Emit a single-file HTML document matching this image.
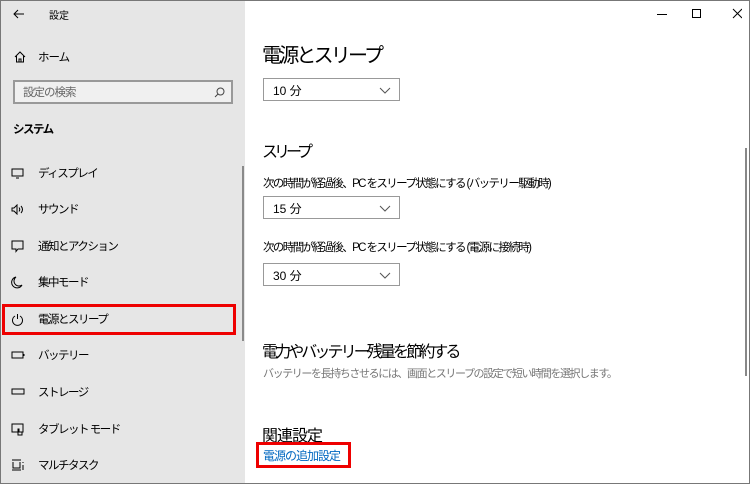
<!DOCTYPE html>
<html><head><meta charset="utf-8"><style>
*{margin:0;padding:0;box-sizing:border-box}
body{width:750px;height:484px;overflow:hidden;font-family:"Liberation Sans","Noto Sans CJK JP",sans-serif;background:#fff;position:relative;color:#000}
.win{position:absolute;left:0;top:0;width:750px;height:484px;border:1px solid #777;}
.side{position:absolute;left:1px;top:1px;width:244px;height:482px;background:#e6e6e6}
.abs{position:absolute;white-space:nowrap}
.item{position:absolute;left:37px;font-size:11.5px;letter-spacing:-1.5px}
.ic{position:absolute;left:10px}
.dd{position:absolute;left:263px;width:137px;height:23px;border:1px solid #999;font-size:12px;padding:3px 0 0 9px}
.dd svg{position:absolute;right:8px;top:8px}
</style></head><body>
<div class="win"></div>
<div class="side">
<svg class="abs" style="left:12px;top:8px" width="12" height="10" viewBox="0 0 12 10"><path d="M11 5H1M5 1L1 5l4 4" stroke="#000" fill="none" stroke-width="1"/></svg>
<div class="abs" style="left:48px;top:6px;font-size:10px">設定</div>
<svg class="abs" style="left:13px;top:50px" width="12" height="12" viewBox="0 0 12 12"><path d="M1 6L6 1l5 5M2.5 5v6h7V5M5 11V8h2v3" stroke="#000" fill="none"/></svg>
<div class="abs" style="left:37px;top:48px;font-size:11.5px;letter-spacing:-1px">ホーム</div>
<div class="abs" style="left:12px;top:79px;width:220px;height:24px;border:2px solid #999;background:#f0f0f0;font-size:11.5px;letter-spacing:-1px;color:#666;padding:2px 0 0 8px">設定の検索
<svg class="abs" style="right:6px;top:5px" width="11" height="11" viewBox="0 0 11 11"><circle cx="6.5" cy="4.5" r="3.5" stroke="#444" fill="none"/><path d="M4 7L1 10" stroke="#444"/></svg></div>
<div class="abs" style="left:12px;top:120px;font-size:11.5px;letter-spacing:-1.5px;font-weight:bold">システム</div>
<div class="abs" style="left:241px;top:165px;width:2px;height:175px;background:#8a8a8a"></div>

<svg class="ic abs" style="top:167px" width="13" height="11" viewBox="0 0 13 11"><rect x="1" y="1" width="11" height="7" stroke="#000" fill="none"/><path d="M5 10h3" stroke="#000"/></svg>
<div class="item" style="top:164px">ディスプレイ</div>
<svg class="ic abs" style="top:203px" width="14" height="11" viewBox="0 0 14 11"><path d="M1 4h2l3-3v9L3 7H1z" stroke="#000" fill="none"/><path d="M8 3.5q1.5 2 0 4M10 2q3 3.5 0 7" stroke="#000" fill="none"/></svg>
<div class="item" style="top:200px">サウンド</div>
<svg class="ic abs" style="top:239px" width="13" height="13" viewBox="0 0 13 13"><path d="M1 1h11v8H7l-2 2.5V9H1z" stroke="#000" fill="none"/></svg>
<div class="item" style="top:237px">通知とアクション</div>
<svg class="ic abs" style="top:275px" width="12" height="13" viewBox="0 0 12 13"><path d="M5 1a5.5 5.5 0 1 0 6 8A5 5 0 0 1 5 1z" stroke="#000" fill="none"/></svg>
<div class="item" style="top:273px">集中モード</div>
<div class="abs" style="left:1px;top:303px;width:234px;height:31px;border:3px solid #e00"></div>
<svg class="ic abs" style="top:312px" width="13" height="13" viewBox="0 0 13 13"><path d="M4 3a5 5 0 1 0 5 0M6.5 1v5" stroke="#000" fill="none"/></svg>
<div class="item" style="top:310px">電源とスリープ</div>
<svg class="ic abs" style="top:350px" width="14" height="8" viewBox="0 0 14 8"><rect x="1" y="1" width="11" height="6" stroke="#000" fill="none"/><path d="M13 3v2" stroke="#000"/></svg>
<div class="item" style="top:346px">バッテリー</div>
<svg class="ic abs" style="top:387px" width="14" height="7" viewBox="0 0 14 7"><rect x="1" y="1" width="12" height="5" stroke="#000" fill="none"/></svg>
<div class="item" style="top:383px">ストレージ</div>
<svg class="ic abs" style="top:422px" width="14" height="13" viewBox="0 0 14 13"><rect x="1" y="1" width="11" height="8" stroke="#000" fill="none"/><path d="M7 12V6l1 0 0 3h3v3z" stroke="#000" fill="#e6e6e6"/></svg>
<div class="item" style="top:420px">タブレット モード</div>
<svg class="ic abs" style="top:458px" width="14" height="12" viewBox="0 0 14 12"><path d="M1 1h9M1 11h9M2 3v6h7V3M12 3v1M12 6v5" stroke="#000" fill="none"/></svg>
<div class="item" style="top:456px">マルチタスク</div>
</div>

<svg class="abs" style="left:657px;top:8px" width="85" height="12" viewBox="0 0 85 12"><path d="M0 6.5h10" stroke="#000"/><rect x="35.5" y="1.5" width="8" height="8" stroke="#000" fill="none"/><path d="M76 1l9 9M85 1l-9 9" stroke="#000"/></svg>
<div class="abs" style="left:745px;top:148px;width:2px;height:228px;background:#888"></div>

<div class="abs" style="left:262px;top:39px;font-size:20px;letter-spacing:-2.8px">電源とスリープ</div>
<div class="dd" style="top:78px">10 分<svg width="12" height="7" viewBox="0 0 12 7"><path d="M1 1l5 5 5-5" stroke="#555" fill="none"/></svg></div>
<div class="abs" style="left:262px;top:138px;font-size:16px;letter-spacing:-4px">スリープ</div>
<div class="abs" style="left:263px;top:175px;font-size:11.5px;letter-spacing:-1.6px">次の時間が経過後、PC をスリープ状態にする (バッテリー駆動時)</div>
<div class="dd" style="top:196px">15 分<svg width="12" height="7" viewBox="0 0 12 7"><path d="M1 1l5 5 5-5" stroke="#555" fill="none"/></svg></div>
<div class="abs" style="left:263px;top:239px;font-size:11.5px;letter-spacing:-1.6px">次の時間が経過後、PC をスリープ状態にする (電源に接続時)</div>
<div class="dd" style="top:263px">30 分<svg width="12" height="7" viewBox="0 0 12 7"><path d="M1 1l5 5 5-5" stroke="#555" fill="none"/></svg></div>
<div class="abs" style="left:262px;top:338px;font-size:16px;letter-spacing:-2.9px">電力やバッテリー残量を節約する</div>
<div class="abs" style="left:263px;top:365px;font-size:11px;letter-spacing:-1.4px;color:#777">バッテリーを長持ちさせるには、画面とスリープの設定で短い時間を選択します。</div>
<div class="abs" style="left:262px;top:422px;font-size:16px;letter-spacing:-1px">関連設定</div>
<div class="abs" style="left:256px;top:442px;width:95px;height:26px;border:3px solid #e00"></div>
<div class="abs" style="left:263px;top:447px;font-size:12px;letter-spacing:-1px;color:#0067c0">電源の追加設定</div>
</body></html>
